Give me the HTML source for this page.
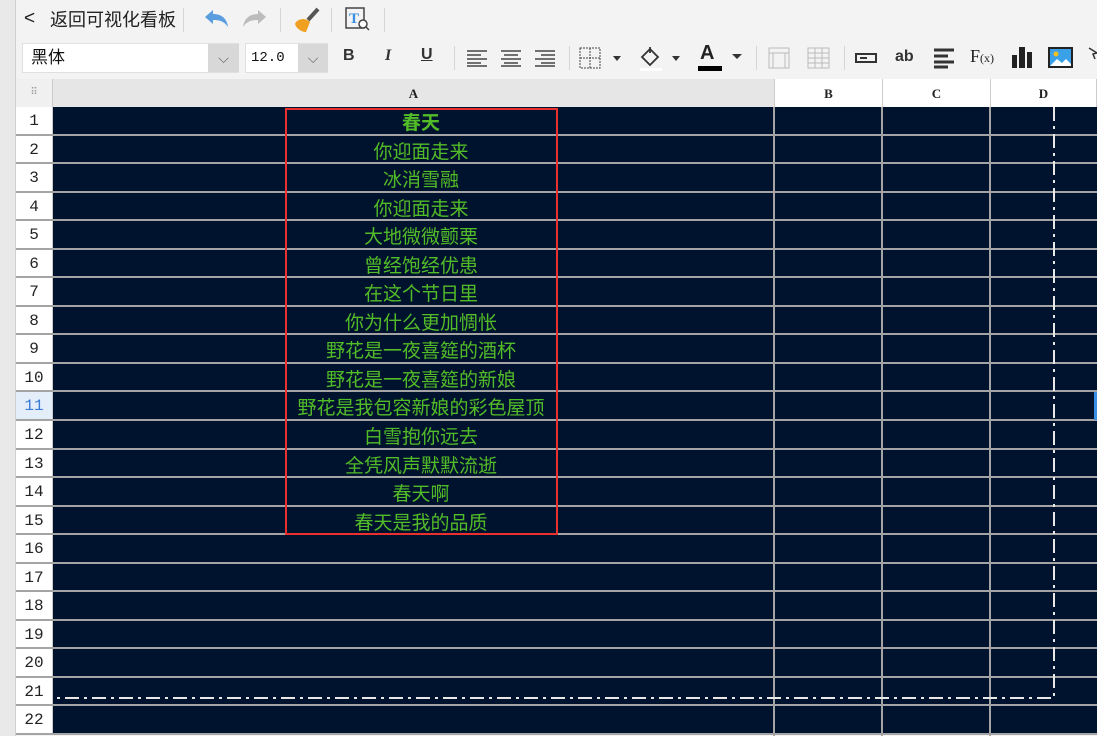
<!DOCTYPE html>
<html><head><meta charset="utf-8"><style>
*{margin:0;padding:0;box-sizing:border-box}
body{width:1097px;height:736px;overflow:hidden;background:#f3f3f3;font-family:"Liberation Sans","Noto Sans CJK SC",sans-serif;position:relative}
.abs{position:absolute}
.sep{position:absolute;width:1px;background:#d6d6d6}
#rows{position:absolute;left:16px;top:107px;width:1081px}
.r{height:28.55px;display:flex;border-bottom:2px solid #a4a4a4}
.r .h{width:37px;background:#fff;font:16px "Liberation Mono","DejaVu Sans Mono",monospace;color:#222;text-align:center;line-height:29px;border-right:1px solid #ccc}
.r .d{flex:1;background:#00132e;position:relative}
.r .t{position:absolute;left:232px;width:272px;text-align:center;color:#52bb28;font-size:19px;line-height:29px;font-family:"Noto Sans CJK SC",sans-serif;white-space:nowrap}
.vl{position:absolute;top:107px;width:2px;height:629px;background:#a4a4a4}
.ch{position:absolute;top:79px;height:28px;font:bold 13px "Liberation Serif",serif;text-align:center;line-height:30px;color:#222;border-right:1px solid #ccc}
</style></head><body>
<div class="abs" style="left:0;top:0;width:16px;height:736px;background:#e9e9e9;border-right:1px solid #d0d0d0"></div>
<div class="abs" style="left:24px;top:6px;font-size:19px;color:#222;line-height:26px">&lt;</div>
<div class="abs" style="left:50px;top:7px;font-size:18px;color:#222;line-height:26px">返回可视化看板</div>
<div class="sep" style="left:183px;top:8px;height:24px"></div>
<svg class="abs" style="left:202px;top:8px" width="28" height="22"><path d="M3 9 L11 2 L11 6 C20 6 25 11 26 19 C22 13 17 12 11 12 L11 16 Z" fill="#5a9ee0"/></svg>
<svg class="abs" style="left:241px;top:8px" width="28" height="22"><path d="M25 9 L17 2 L17 6 C8 6 3 11 2 19 C6 13 11 12 17 12 L17 16 Z" fill="#bcbcbc"/></svg>
<div class="sep" style="left:280px;top:8px;height:24px"></div>
<svg class="abs" style="left:292px;top:6px" width="28" height="26"><path d="M16 14 L26 3" stroke="#555" stroke-width="4"/><path d="M4 16 C8 12 14 12 18 16 L14 26 C9 26 4 22 3 18Z" fill="#f0a020"/></svg>
<div class="sep" style="left:331px;top:8px;height:24px"></div>
<svg class="abs" style="left:345px;top:7px" width="26" height="24"><rect x="1" y="1" width="18" height="20" fill="none" stroke="#444" stroke-width="1.5"/><text x="4" y="16" font-size="15" font-weight="bold" fill="#3b8fe0" font-family="Liberation Serif">T</text><circle cx="18" cy="17" r="4" fill="#fff" stroke="#444" stroke-width="1.5"/><path d="M21 20 L24 23" stroke="#444" stroke-width="1.5"/></svg>
<div class="sep" style="left:384px;top:8px;height:24px"></div>
<div class="abs" style="left:22px;top:43px;width:217px;height:30px;background:#fff;border:1px solid #e0e0e0"></div>
<div class="abs" style="left:31px;top:46px;font-size:17px;line-height:24px;color:#111">黑体</div>
<div class="abs" style="left:208px;top:44px;width:31px;height:28px;background:#d8d8d8;text-align:center;color:#666;font-size:14px;line-height:28px">⌵</div>
<div class="abs" style="left:245px;top:43px;width:83px;height:30px;background:#fff;border:1px solid #e0e0e0"></div>
<div class="abs" style="left:251px;top:47px;font:14px 'Liberation Mono',monospace;line-height:22px;color:#111">12.0</div>
<div class="abs" style="left:298px;top:44px;width:30px;height:28px;background:#d8d8d8;text-align:center;color:#666;font-size:14px;line-height:28px">⌵</div>
<div class="abs" style="left:343px;top:47px;font:bold 16px 'Liberation Sans';color:#333">B</div>
<div class="abs" style="left:385px;top:47px;font:italic bold 16px 'Liberation Serif';color:#333">I</div>
<div class="abs" style="left:421px;top:46px;font:bold 16px 'Liberation Sans';color:#333;text-decoration:underline">U</div>
<div class="sep" style="left:454px;top:46px;height:24px"></div>
<svg class="abs" style="left:466px;top:49px" width="90" height="18" stroke="#444" stroke-width="1.6"><path d="M1 2H21M1 6H15M1 10H21M1 14H15M1 17H21"/><path d="M35 2H55M38 6H52M35 10H55M38 14H52M35 17H55"/><path d="M69 2H89M75 6H89M69 10H89M75 14H89M69 17H89"/></svg>
<div class="sep" style="left:569px;top:46px;height:24px"></div>
<svg class="abs" style="left:579px;top:47px" width="46" height="22"><rect x="1" y="1" width="20" height="20" fill="none" stroke="#444" stroke-dasharray="2 1"/><path d="M11 1V21M1 11H21" stroke="#444" stroke-dasharray="2 1"/><path d="M34 9L42 9L38 14Z" fill="#333"/></svg>
<svg class="abs" style="left:638px;top:45px" width="48" height="26"><path d="M4 12 L12 4 L20 12 L12 20Z" fill="none" stroke="#333" stroke-width="1.8"/><path d="M12 2V8" stroke="#333" stroke-width="1.8"/><rect x="2" y="23" width="22" height="3" fill="#fff"/><path d="M34 11L42 11L38 16Z" fill="#333"/></svg>
<div class="abs" style="left:700px;top:42px;font:bold 20px 'Liberation Sans';color:#222">A</div>
<div class="abs" style="left:698px;top:66px;width:24px;height:5px;background:#000"></div>
<svg class="abs" style="left:730px;top:52px" width="14" height="10"><path d="M2 2L12 2L7 7Z" fill="#333"/></svg>
<div class="sep" style="left:756px;top:46px;height:24px"></div>
<svg class="abs" style="left:768px;top:47px" width="64" height="22" stroke="#bbb" fill="none"><rect x="1" y="1" width="20" height="20"/><path d="M1 6H21M5 6V21M17 6V21"/><rect x="40" y="1" width="21" height="20"/><path d="M40 6H61M40 11H61M40 16H61M47 1V21M54 1V21"/></svg>
<div class="sep" style="left:844px;top:46px;height:24px"></div>
<svg class="abs" style="left:855px;top:52px" width="24" height="12"><rect x="1" y="2" width="20" height="8" fill="none" stroke="#333" stroke-width="2"/><path d="M5 6H12" stroke="#333" stroke-width="2"/></svg>
<div class="abs" style="left:895px;top:48px;font:bold 16px 'Liberation Sans';color:#333">ab</div>
<svg class="abs" style="left:933px;top:47px" width="24" height="22" stroke="#333" stroke-width="3"><path d="M1 3H21M1 9H15M1 15H21M1 20H15"/></svg>
<div class="abs" style="left:970px;top:46px;font:18px 'Liberation Serif';color:#222">F<span style="font-size:12px">(x)</span></div>
<svg class="abs" style="left:1011px;top:46px" width="24" height="22" fill="#222"><rect x="1" y="9" width="5" height="13"/><rect x="8" y="1" width="6" height="21"/><rect x="16" y="6" width="5" height="16"/></svg>
<svg class="abs" style="left:1048px;top:47px" width="28" height="22"><rect x="1" y="1" width="23" height="19" fill="#3aa0e8" stroke="#222" stroke-width="2"/><path d="M2 19 L9 12 L14 16 L18 12 L23 17 V19Z" fill="#fff"/><circle cx="8" cy="7" r="2.5" fill="#f2c020"/></svg>
<svg class="abs" style="left:1088px;top:47px" width="10" height="14"><path d="M1 1L9 6L5 7L7 12" stroke="#333" fill="none" stroke-width="1.5"/></svg>
<div class="abs" style="left:16px;top:79px;width:37px;height:28px;background:#f0f0f0;border-right:1px solid #ccc;color:#999;font-size:10px;text-align:center;line-height:28px">⠿</div>
<div class="ch" style="left:53px;width:722px;background:#e6e6e6">A</div>
<div class="ch" style="left:775px;width:108px;background:#fff">B</div>
<div class="ch" style="left:883px;width:108px;background:#fff">C</div>
<div class="ch" style="left:991px;width:106px;background:#fff">D</div>
<div id="rows">
<div class="r"><div class="h">1</div><div class="d"><div class="t" style="font-weight:bold">春天</div></div></div>
<div class="r"><div class="h">2</div><div class="d"><div class="t">你迎面走来</div></div></div>
<div class="r"><div class="h">3</div><div class="d"><div class="t">冰消雪融</div></div></div>
<div class="r"><div class="h">4</div><div class="d"><div class="t">你迎面走来</div></div></div>
<div class="r"><div class="h">5</div><div class="d"><div class="t">大地微微颤栗</div></div></div>
<div class="r"><div class="h">6</div><div class="d"><div class="t">曾经饱经优患</div></div></div>
<div class="r"><div class="h">7</div><div class="d"><div class="t">在这个节日里</div></div></div>
<div class="r"><div class="h">8</div><div class="d"><div class="t">你为什么更加惆怅</div></div></div>
<div class="r"><div class="h">9</div><div class="d"><div class="t">野花是一夜喜筵的酒杯</div></div></div>
<div class="r"><div class="h">10</div><div class="d"><div class="t">野花是一夜喜筵的新娘</div></div></div>
<div class="r"><div class="h" style="background:#e3eefa;color:#3a7bd5">11</div><div class="d"><div class="t">野花是我包容新娘的彩色屋顶</div></div></div>
<div class="r"><div class="h">12</div><div class="d"><div class="t">白雪抱你远去</div></div></div>
<div class="r"><div class="h">13</div><div class="d"><div class="t">全凭风声默默流逝</div></div></div>
<div class="r"><div class="h">14</div><div class="d"><div class="t">春天啊</div></div></div>
<div class="r"><div class="h">15</div><div class="d"><div class="t">春天是我的品质</div></div></div>
<div class="r"><div class="h">16</div><div class="d"></div></div>
<div class="r"><div class="h">17</div><div class="d"></div></div>
<div class="r"><div class="h">18</div><div class="d"></div></div>
<div class="r"><div class="h">19</div><div class="d"></div></div>
<div class="r"><div class="h">20</div><div class="d"></div></div>
<div class="r"><div class="h">21</div><div class="d"></div></div>
<div class="r"><div class="h">22</div><div class="d"></div></div>
</div>
<div class="vl" style="left:773px"></div>
<div class="vl" style="left:881px"></div>
<div class="vl" style="left:989px"></div>
<div class="abs" style="left:285px;top:108px;width:273px;height:427px;border:2px solid #e8302f"></div>
<svg class="abs" style="left:0;top:0" width="1097" height="736"><path d="M1054 107V698H53" fill="none" stroke="#e8e8e8" stroke-width="2" stroke-dasharray="14 5 3 5"/></svg>
<div class="abs" style="left:1094px;top:392px;width:3px;height:28px;background:#3a8ee6"></div>
</body></html>
